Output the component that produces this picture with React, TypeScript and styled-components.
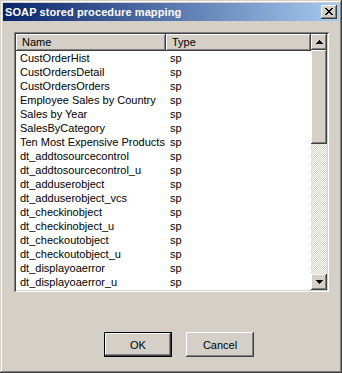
import React from "react";
import styled, { createGlobalStyle } from "styled-components";

const procedures = [
  "CustOrderHist",
  "CustOrdersDetail",
  "CustOrdersOrders",
  "Employee Sales by Country",
  "Sales by Year",
  "SalesByCategory",
  "Ten Most Expensive Products",
  "dt_addtosourcecontrol",
  "dt_addtosourcecontrol_u",
  "dt_adduserobject",
  "dt_adduserobject_vcs",
  "dt_checkinobject",
  "dt_checkinobject_u",
  "dt_checkoutobject",
  "dt_checkoutobject_u",
  "dt_displayoaerror",
  "dt_displayoaerror_u",
];

const raised = `
  box-shadow: inset -1px -1px #404040, inset 1px 1px #ffffff,
    inset -2px -2px #808080, inset 2px 2px #d4d0c8;
`;

function Arrow({ down }: { down?: boolean }) {
  return (
    <svg width="7" height="4" viewBox="0 0 7 4">
      <path
        d={down ? "M0 0H7L3.5 4Z" : "M0 4H7L3.5 0Z"}
        fill="#000"
        shapeRendering="crispEdges"
      />
    </svg>
  );
}

function App() {
  return (
    <>
      <GlobalStyle />
      <Window>
        <TitleBar>
          <Title>SOAP stored procedure mapping</Title>
          <CloseBtn>
            <svg width="8" height="7" viewBox="0 0 8 7">
              <path
                d="M0 0h2v1h1v1h2V1h1V0h2v1H7v1H6v1H5v1h1v1h1v1h1v1H6V6H5V5H3v1H2v1H0V6h1V5h1V4h1V3H2V2H1V1H0Z"
                fill="#000"
              />
            </svg>
          </CloseBtn>
        </TitleBar>
        <Body>
          <ListBox>
            <Table>
              <HeaderRow>
                <HeaderCell $width={150}>Name</HeaderCell>
                <HeaderCell $width={145}>Type</HeaderCell>
              </HeaderRow>
              {procedures.map((name) => (
                <Row key={name}>
                  <Cell $width={150}>{name}</Cell>
                  <Cell $width={145}>sp</Cell>
                </Row>
              ))}
            </Table>
            <ScrollBar>
              <ScrollBtn>
                <Arrow />
              </ScrollBtn>
              <Thumb />
              <Track />
              <ScrollBtn>
                <Arrow down />
              </ScrollBtn>
            </ScrollBar>
          </ListBox>
          <Footer>
            <Button $default>OK</Button>
            <Button>Cancel</Button>
          </Footer>
        </Body>
      </Window>
    </>
  );
}
export default App;

const GlobalStyle = createGlobalStyle`
  body {
    margin: 0;
    background: #d4d0c8;
    font-family: "Liberation Sans", Arial, sans-serif;
    font-size: 11px;
  }
`;

const Window = styled.div`
  width: 342px;
  height: 373px;
  box-sizing: border-box;
  padding: 3px;
  background: #d4d0c8;
  box-shadow: inset -1px -1px #404040, inset 1px 1px #d4d0c8,
    inset -2px -2px #808080, inset 2px 2px #ffffff;
  display: flex;
  flex-direction: column;
`;

const TitleBar = styled.div`
  height: 18px;
  display: flex;
  align-items: center;
  justify-content: space-between;
  padding: 0 2px 0 2px;
  background: linear-gradient(to right, #0a246a, #a6caf0);
`;

const Title = styled.span`
  color: #fff;
  font-weight: bold;
  font-size: 11px;
  letter-spacing: 0.1px;
`;

const CloseBtn = styled.div`
  width: 16px;
  height: 14px;
  box-sizing: border-box;
  background: #d4d0c8;
  ${raised}
  display: flex;
  align-items: center;
  justify-content: center;
  padding: 0 1px 1px 0;
`;

const Body = styled.div`
  flex: 1;
  display: flex;
  flex-direction: column;
  padding: 11px 0 0 11px;
`;

const ListBox = styled.div`
  width: 315px;
  height: 260px;
  box-sizing: border-box;
  padding: 2px;
  background: #fff;
  box-shadow: inset 1px 1px #808080, inset -1px -1px #ffffff,
    inset 2px 2px #404040, inset -2px -2px #d4d0c8;
  display: flex;
  overflow: hidden;
`;

const Table = styled.div`
  flex: 1;
  display: flex;
  flex-direction: column;
`;

const HeaderRow = styled.div`
  display: flex;
  height: 17px;
`;

const HeaderCell = styled.div<{ $width: number }>`
  width: ${(p) => p.$width}px;
  box-sizing: border-box;
  background: #d4d0c8;
  ${raised}
  padding: 2px 0 0 6px;
  line-height: 13px;
  color: #000;
`;

const Row = styled.div`
  display: flex;
  height: 14px;
  line-height: 14px;
`;

const Cell = styled.div<{ $width: number }>`
  width: ${(p) => p.$width}px;
  box-sizing: border-box;
  padding-left: 4px;
  color: #000;
  white-space: nowrap;
  overflow: hidden;
`;

const ScrollBar = styled.div`
  width: 16px;
  display: flex;
  flex-direction: column;
`;

const ScrollBtn = styled.div`
  width: 16px;
  height: 16px;
  box-sizing: border-box;
  background: #d4d0c8;
  ${raised}
  display: flex;
  align-items: center;
  justify-content: center;
  padding-bottom: 1px;
`;

const Thumb = styled.div`
  height: 94px;
  background: #d4d0c8;
  ${raised}
`;

const Track = styled.div`
  flex: 1;
  background: repeating-conic-gradient(#ffffff 0 25%, #d4d0c8 0 50%) 0 0 / 2px
    2px;
`;

const Footer = styled.div`
  display: flex;
  gap: 14px;
  margin-top: 40px;
  padding-left: 90px;
`;

const Button = styled.div<{ $default?: boolean }>`
  width: 68px;
  height: 25px;
  box-sizing: border-box;
  background: #d4d0c8;
  display: flex;
  align-items: center;
  justify-content: center;
  color: #000;
  box-shadow: ${(p) =>
    p.$default
      ? "inset 0 0 0 1px #000, inset -2px -2px #404040, inset 2px 2px #ffffff, inset -3px -3px #808080"
      : "inset -1px -1px #404040, inset 1px 1px #ffffff, inset -2px -2px #808080, inset 2px 2px #d4d0c8"};
`;
